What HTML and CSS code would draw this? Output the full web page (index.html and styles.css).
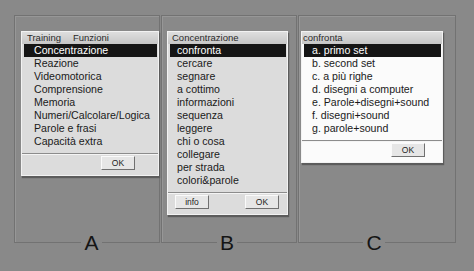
FILE: index.html
```html
<!DOCTYPE html>
<html lang="it">
<head>
    <meta charset="UTF-8">
    <title>Menu di training</title>
    <link rel="stylesheet" href="styles.css">
</head>
<body>
    <div class="stage">
        <div class="panel panel-a">
            <div class="dialog">
                <div class="title">Training<span class="gap"></span>Funzioni</div>
                <ul class="list">
                    <li class="selected">Concentrazione</li>
                    <li>Reazione</li>
                    <li>Videomotorica</li>
                    <li>Comprensione</li>
                    <li>Memoria</li>
                    <li>Numeri/Calcolare/Logica</li>
                    <li>Parole e frasi</li>
                    <li>Capacità extra</li>
                </ul>
                <div class="footer">
                    <button class="btn">OK</button>
                </div>
            </div>
            <div class="label-row"><span class="label">A</span></div>
        </div>

        <div class="panel panel-b">
            <div class="dialog">
                <div class="title">Concentrazione</div>
                <ul class="list">
                    <li class="selected">confronta</li>
                    <li>cercare</li>
                    <li>segnare</li>
                    <li>a cottimo</li>
                    <li>informazioni</li>
                    <li>sequenza</li>
                    <li>leggere</li>
                    <li>chi o cosa</li>
                    <li>collegare</li>
                    <li>per strada</li>
                    <li>colori&amp;parole</li>
                </ul>
                <div class="footer">
                    <button class="btn">info</button>
                    <button class="btn">OK</button>
                </div>
            </div>
            <div class="label-row"><span class="label">B</span></div>
        </div>

        <div class="panel panel-c">
            <div class="dialog">
                <div class="title">confronta</div>
                <ul class="list">
                    <li class="selected">a. primo set</li>
                    <li>b. second set</li>
                    <li>c. a più righe</li>
                    <li>d. disegni a computer</li>
                    <li>e. Parole+disegni+sound</li>
                    <li>f. disegni+sound</li>
                    <li>g. parole+sound</li>
                </ul>
                <div class="footer">
                    <button class="btn">OK</button>
                </div>
            </div>
            <div class="label-row"><span class="label">C</span></div>
        </div>
    </div>
</body>
</html>
```

FILE: styles.css
```css
* {
    margin: 0;
    padding: 0;
    box-sizing: border-box;
}

body {
    width: 474px;
    height: 271px;
    overflow: hidden;
    background-color: #898989;
    font-family: "Liberation Sans", Arial, sans-serif;
    color: #1a1a1a;
}

.stage {
    display: flex;
    padding: 15px 0 0 14px;
}

.panel {
    display: flex;
    flex-direction: column;
    align-items: flex-start;
    height: 228px;
    padding-top: 16px;
    border: 1px solid #727272;
    box-shadow: inset 1px 1px 0 #979797;
}

.panel-a {
    width: 146px;
}

.panel-b {
    width: 136px;
    margin-left: 1px;
}

.panel-c {
    width: 158px;
    margin-left: 1px;
}

.dialog {
    background-color: #dcdcdc;
    box-shadow: 0 0 0 1px #f2f2f2, 1px 2px 1px 1px #5c5c5c;
}

.panel-a .dialog {
    width: 136px;
    margin-left: 7px;
}

.panel-b .dialog {
    width: 119px;
    margin-left: 6px;
}

.panel-c .dialog {
    width: 140px;
    margin-left: 3px;
    background-color: #fbfbfb;
}

.title {
    height: 12px;
    line-height: 12px;
    font-size: 9.5px;
    color: #2a2a2a;
    background: linear-gradient(#dedede, #c6c6c6);
    white-space: nowrap;
}

.panel-a .title {
    padding-left: 5px;
}

.panel-b .title {
    padding-left: 4px;
}

.panel-c .title {
    padding-left: 1px;
}

.gap {
    display: inline-block;
    width: 12px;
}

.list {
    list-style: none;
    padding: 0 1px 5px 2px;
}

.list li {
    height: 13px;
    line-height: 13px;
    font-size: 10.6px;
    white-space: nowrap;
}

.panel-a .list li {
    padding-left: 10px;
}

.panel-b .list li {
    padding-left: 7px;
}

.panel-c .list li {
    padding-left: 8px;
}

.list .selected {
    background-color: #151515;
    color: #fff;
}

.footer {
    display: flex;
    justify-content: flex-end;
    padding: 2px 23px 5px 0;
    border-top: 1px solid #8c8c8c;
    box-shadow: inset 0 1px 0 #f4f4f4;
}

.panel-b .footer {
    justify-content: space-between;
    padding: 2px 8px 5px 7px;
}

.panel-c .footer {
    padding-right: 17px;
}

.btn {
    width: 34px;
    height: 14px;
    font-family: "Liberation Sans", Arial, sans-serif;
    font-size: 8.5px;
    color: #222;
    background-color: #e6e6e6;
    border: 1px solid;
    border-color: #fafafa #707070 #707070 #fafafa;
}

.label-row {
    display: flex;
    justify-content: center;
    width: 100%;
    margin-top: auto;
    margin-bottom: -12px;
}

.label {
    padding: 0 3px;
    background-color: #898989;
    font-size: 21px;
    line-height: 22px;
    color: #151515;
}

.panel-a .label {
    margin-left: 9px;
}

.panel-b .label {
    margin-right: 4px;
}

.panel-c .label {
    margin-right: 6px;
}
```
